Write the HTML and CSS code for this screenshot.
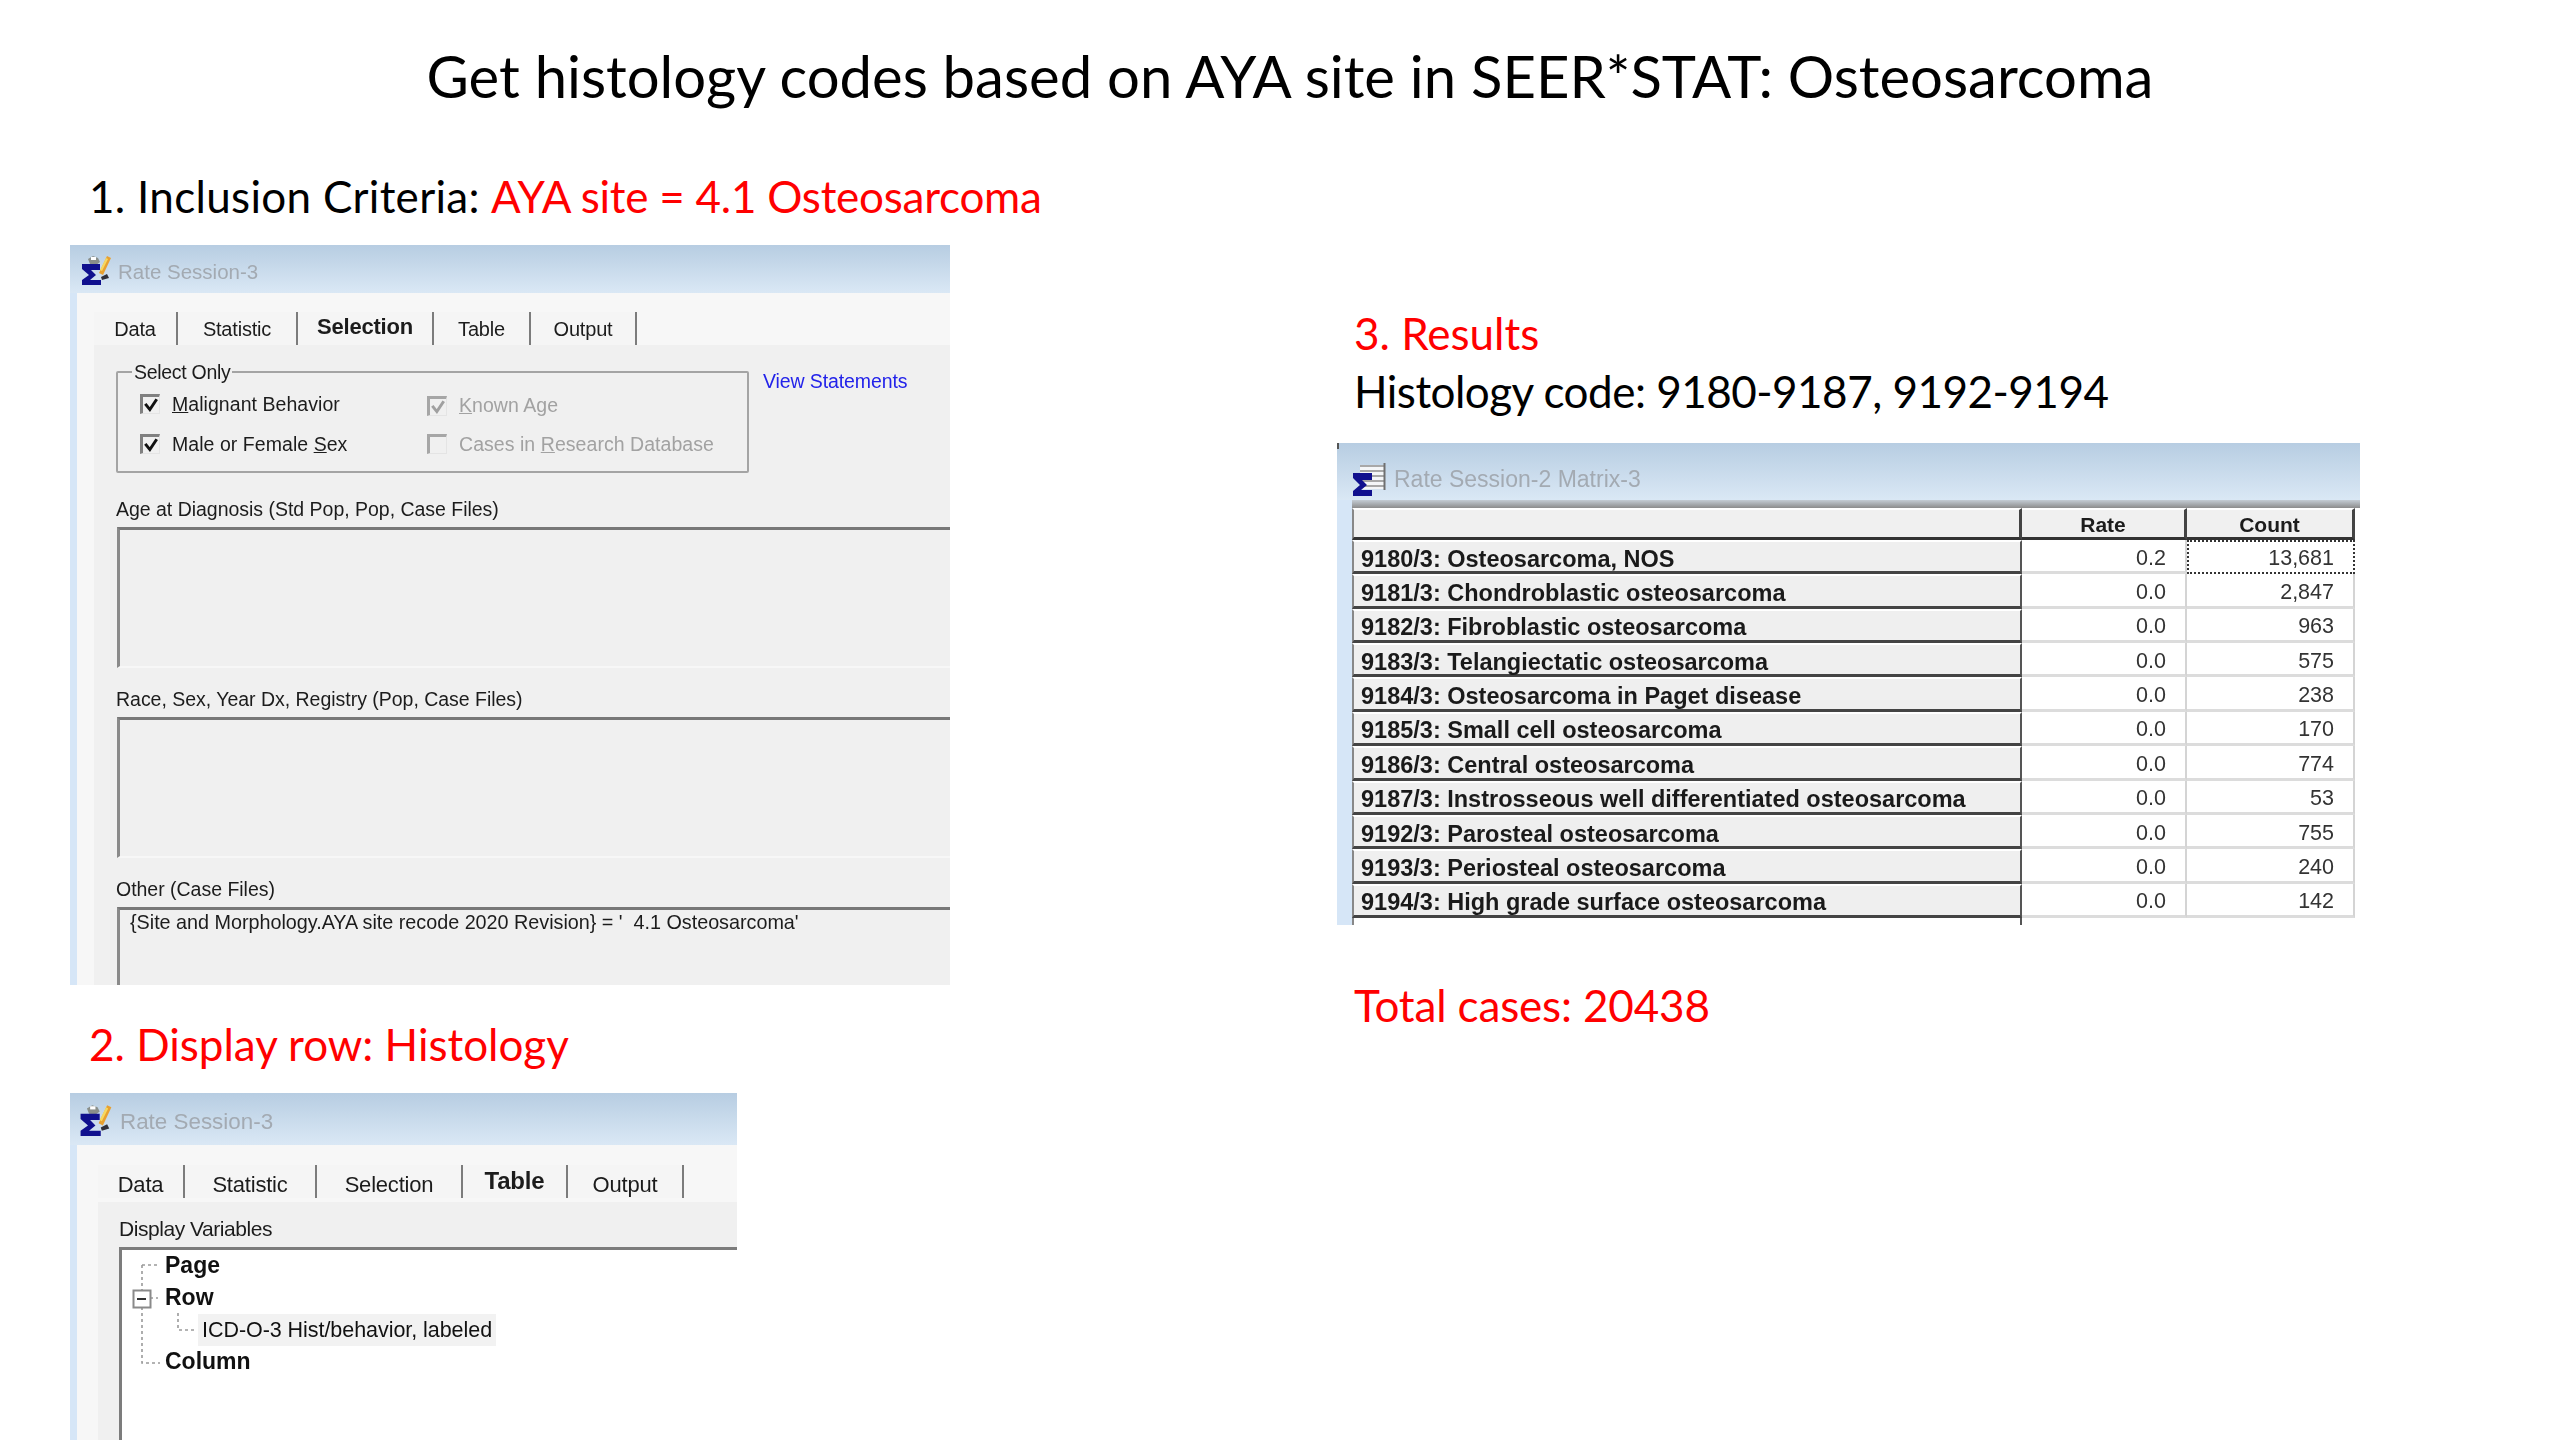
FILE: index.html
```html
<!DOCTYPE html>
<html lang="en">
<head>
<meta charset="utf-8">
<title>Get histology codes based on AYA site in SEER*STAT: Osteosarcoma</title>
<link rel="stylesheet" href="styles.css">
</head>
<body>
<main class="slide">
  <h1 class="title">Get histology codes based on AYA site in SEER*STAT: Osteosarcoma</h1>

  <p class="note note-inclusion"><span class="lead">1. Inclusion Criteria:</span> <span class="red tight">AYA site = 4.1 Osteosarcoma</span></p>

  <section class="win win-selection">
    <header class="titlebar">
      <svg class="ico" viewBox="0 0 30 32"><path d="M6 6l5-3 5 2 2 4-4 3-6-1z" fill="#8a8f8a"/><path d="M9 4h5v3H9z" fill="#fff"/><path d="M17 20L25 3l4 2-8 17z" fill="#e8a030"/><path d="M18 17l6-12 2 1-6 12z" fill="#f6d860"/><path d="M19 24l6-3 2 4-7 2z" fill="#30303a"/><path d="M0 11h18v6H9l5 5-6 5h11v5H0v-5l7-5-7-6z" fill="#10108e"/></svg>
      <span class="wintitle">Rate Session-3</span>
    </header>
    <div class="winbody">
      <nav class="tabs tabs-a">
        <span class="tab">Data</span><span class="tab">Statistic</span><span class="tab active">Selection</span><span class="tab">Table</span><span class="tab">Output</span>
      </nav>
      <div class="panel panel-a">
        <div class="selectrow">
          <fieldset class="group">
            <span class="legend">Select Only</span>
            <label class="chk"><i class="box on"><svg viewBox="0 0 14 14"><path d="M2 6l4 5 6-9" /></svg></i><span><u>M</u>alignant Behavior</span></label>
            <label class="chk off low"><i class="box on"><svg viewBox="0 0 14 14"><path d="M2 6l4 5 6-9" /></svg></i><span><u>K</u>nown Age</span></label>
            <label class="chk"><i class="box on"><svg viewBox="0 0 14 14"><path d="M2 6l4 5 6-9" /></svg></i><span>Male or Female <u>S</u>ex</span></label>
            <label class="chk off"><i class="box"></i><span>Cases in <u>R</u>esearch Database</span></label>
          </fieldset>
          <a class="link">View Statements</a>
        </div>
        <div class="field first">
          <div class="flabel">Age at Diagnosis (Std Pop, Pop, Case Files)</div>
          <div class="fbox"></div>
        </div>
        <div class="field">
          <div class="flabel">Race, Sex, Year Dx, Registry (Pop, Case Files)</div>
          <div class="fbox"></div>
        </div>
        <div class="field last">
          <div class="flabel">Other (Case Files)</div>
          <div class="fbox filled">{Site and Morphology.AYA site recode 2020 Revision} = '&nbsp; 4.1 Osteosarcoma'</div>
        </div>
      </div>
    </div>
  </section>

  <p class="note note-display red">2. Display row: Histology</p>

  <section class="win win-table">
    <header class="titlebar">
      <svg class="ico" viewBox="0 0 30 32"><path d="M6 6l5-3 5 2 2 4-4 3-6-1z" fill="#8a8f8a"/><path d="M9 4h5v3H9z" fill="#fff"/><path d="M17 20L25 3l4 2-8 17z" fill="#e8a030"/><path d="M18 17l6-12 2 1-6 12z" fill="#f6d860"/><path d="M19 24l6-3 2 4-7 2z" fill="#30303a"/><path d="M0 11h18v6H9l5 5-6 5h11v5H0v-5l7-5-7-6z" fill="#10108e"/></svg>
      <span class="wintitle">Rate Session-3</span>
    </header>
    <div class="winbody">
      <nav class="tabs tabs-b">
        <span class="tab">Data</span><span class="tab">Statistic</span><span class="tab">Selection</span><span class="tab active">Table</span><span class="tab">Output</span>
      </nav>
      <div class="panel panel-b">
        <div class="flabel">Display Variables</div>
        <div class="tree">
          <svg class="treelines" viewBox="0 0 80 120" width="80" height="120">
            <path class="dash" d="M20 15V40M20 57V113H38M20 15H38M28 48H36M56 63V80H75"/>
            <rect class="plus" x="11.5" y="40.5" width="17" height="17"/>
            <path class="minus" d="M15 49h9"/>
          </svg>
          <div class="node">Page</div>
          <div class="node">Row</div>
          <div class="node leaf"><span>ICD-O-3 Hist/behavior, labeled</span></div>
          <div class="node">Column</div>
        </div>
      </div>
    </div>
  </section>

  <p class="note note-results red">3. Results</p>
  <p class="note note-code">Histology code: 9180-9187, 9192-9194</p>

  <section class="win win-matrix">
    <header class="titlebar">
      <svg class="ico ico-m" viewBox="0 0 33 33"><path d="M7 2h24v24H7z" fill="#f4f6f8"/><path d="M7 3h24M7 8h24M7 13h24M7 18h24M7 23h24" stroke="#a8a8a8" stroke-width="2"/><path d="M31.500 0v27" stroke="#707070" stroke-width="2"/><path d="M0 10h19v7H9l5 5-6 5h11v6H0v-5l7-6-7-7z" fill="#10108e"/></svg>
      <span class="wintitle">Rate Session-2 Matrix-3</span>
    </header>
    <div class="matrixbody">
      <div class="matrix">
        <div class="hc hc-stub"></div><div class="hc">Rate</div><div class="hc">Count</div>
        <div class="rh">9180/3: Osteosarcoma, NOS</div><div class="td">0.2</div><div class="td sel">13,681</div>
        <div class="rh">9181/3: Chondroblastic osteosarcoma</div><div class="td">0.0</div><div class="td">2,847</div>
        <div class="rh">9182/3: Fibroblastic osteosarcoma</div><div class="td">0.0</div><div class="td">963</div>
        <div class="rh">9183/3: Telangiectatic osteosarcoma</div><div class="td">0.0</div><div class="td">575</div>
        <div class="rh">9184/3: Osteosarcoma in Paget disease</div><div class="td">0.0</div><div class="td">238</div>
        <div class="rh">9185/3: Small cell osteosarcoma</div><div class="td">0.0</div><div class="td">170</div>
        <div class="rh">9186/3: Central osteosarcoma</div><div class="td">0.0</div><div class="td">774</div>
        <div class="rh">9187/3: Instrosseous well differentiated osteosarcoma</div><div class="td">0.0</div><div class="td">53</div>
        <div class="rh">9192/3: Parosteal osteosarcoma</div><div class="td">0.0</div><div class="td">755</div>
        <div class="rh">9193/3: Periosteal osteosarcoma</div><div class="td">0.0</div><div class="td">240</div>
        <div class="rh">9194/3: High grade surface osteosarcoma</div><div class="td">0.0</div><div class="td">142</div>
        <div class="rh stub"></div><div class="td stub"></div><div class="td stub"></div>
      </div>
    </div>
  </section>

  <p class="note note-total red">Total cases: 20438</p>
</main>
</body>
</html>
```

FILE: styles.css
```css
* { box-sizing: border-box; }
html, body { margin: 0; padding: 0; background: #fff; }
.slide {
  position: relative;
  width: 2560px;
  height: 1440px;
  overflow: hidden;
  background: #fff;
  color: #000;
  font-family: "Lato", "Liberation Sans", sans-serif;
}

/* Slide text */
.title {
  position: absolute;
  top: 40px;
  left: 0;
  width: 2580px;
  margin: 0;
  text-align: center;
  font-size: 58px;
  font-weight: 400;
  line-height: 72px;
}
.note {
  position: absolute;
  margin: 0;
  font-size: 44px;
  line-height: 56px;
  white-space: nowrap;
}
.red { color: #ff0000; }
.lead { letter-spacing: 0.3px; }
.tight { letter-spacing: -0.25px; }
.note-inclusion { left: 89px; top: 168px; }
.note-display { left: 89px; top: 1016px; }
.note-results { left: 1354px; top: 305px; }
.note-code { left: 1354px; top: 363px; letter-spacing: -0.5px; }
.note-total { left: 1354px; top: 977px; letter-spacing: -0.15px; }

/* Windows on the slide */
.win {
  position: absolute;
  display: flex;
  flex-direction: column;
  overflow: hidden;
  font-family: "Liberation Sans", Arial, sans-serif;
  color: #1c1c1c;
  filter: blur(0.7px);
}
.win-selection { left: 70px; top: 245px; width: 880px; height: 740px; --title: 48px; }
.win-table { left: 70px; top: 1093px; width: 667px; height: 347px; --title: 52px; }
.win-matrix { left: 1337px; top: 443px; width: 1023px; height: 482px; --title: 57px; }
.win-matrix::before {
  content: "";
  position: absolute;
  top: 0;
  left: 0;
  width: 2px;
  height: 6px;
  background: #555;
}

.titlebar {
  flex: none;
  height: var(--title);
  display: flex;
  align-items: center;
  padding-left: 12px;
  gap: 6px;
  background: linear-gradient(#b7cde2, #dae8f5);
}
.ico { width: 30px; height: 32px; flex: none; }
.wintitle { color: #a3aab2; font-size: 20.5px; position: relative; top: 3px; }
.win-table .titlebar { padding-left: 10px; gap: 7px; }
.win-table .ico { width: 33px; height: 34px; }
.win-table .wintitle { font-size: 22.4px; }
.win-matrix .titlebar { padding-left: 16px; gap: 8px; padding-top: 15px; }
.ico-m { width: 33px; height: 33px; }
.win-matrix .wintitle { font-size: 23px; top: 0; }

.winbody {
  flex: 1;
  display: flex;
  flex-direction: column;
  min-height: 0;
  background: #f7f7f7;
  border-left: 7px solid #d6e6f7;
}

/* Tabs */
.tabs {
  flex: none;
  display: grid;
  height: 33px;
  margin-top: 19px;
  margin-left: 17px;
  font-size: 20px;
}
.tabs-a { grid-template-columns: 84px 120px 136px 97px 106px; }
.tabs-b {
  grid-template-columns: 87px 132px 146px 105px 116px;
  margin-left: 21px;
  margin-top: 20px;
  height: 32px;
  font-size: 22px;
}
.tab {
  display: flex;
  align-items: center;
  justify-content: center;
  padding-top: 1px;
  background: #f5f5f5;
  border-right: 2px solid #7c7c7c;
  letter-spacing: -0.2px;
}
.tabs-b .tab { padding-top: 6px; }
.tab.active { font-weight: 700; padding-top: 0; padding-bottom: 3px; font-size: 22px; }
.tabs-b .tab.active { font-size: 24px; padding-top: 2px; }

/* Panels */
.panel {
  flex: 1;
  min-height: 0;
  display: flex;
  flex-direction: column;
  background: #f0f0f0;
}
.panel-a { margin-left: 17px; padding: 26px 0 0 22px; }
.panel-b { margin: 5px 0 0 21px; padding: 15px 0 0 21px; }

.selectrow { display: flex; align-items: flex-start; flex: none; }
.group {
  position: relative;
  width: 633px;
  height: 102px;
  margin: 0;
  padding: 21px 0 0 23px;
  display: grid;
  grid-template-columns: 287px 1fr;
  grid-auto-rows: 20px;
  row-gap: 20px;
  border: 2px solid #a4a4a4;
  border-radius: 2px;
}
.legend {
  position: absolute;
  top: -13px;
  left: 14px;
  padding: 0 2px;
  background: #f0f0f0;
  font-size: 19.5px;
  line-height: 24px;
  letter-spacing: -0.3px;
}
.chk {
  display: flex;
  align-items: center;
  gap: 12px;
  font-size: 19.5px;
  white-space: nowrap;
  letter-spacing: 0.05px;
}
.chk.off { color: #a2a2a2; }
.chk.low { margin-top: 3px; }
.box {
  flex: none;
  width: 20px;
  height: 20px;
  margin-left: -1px;
  border-top: 3px solid #808080;
  border-left: 3px solid #808080;
  border-right: 1px solid #e4e4e4;
  border-bottom: 1px solid #e4e4e4;
}
.box svg { display: block; width: 16px; height: 16px; fill: none; stroke: #111; stroke-width: 2.6; }
.chk.off .box { border-top-color: #a6a6a6; border-left-color: #a6a6a6; }
.chk.off .box svg { stroke: #a0a0a0; }
.link {
  margin: -2px 0 0 14px;
  color: #2323ea;
  font-size: 19.5px;
  line-height: 24px;
  letter-spacing: -0.1px;
  white-space: nowrap;
}

.field { display: flex; flex-direction: column; flex: none; margin-top: 20px; }
.field.first { margin-top: 25px; }
.field.last { flex: 1; min-height: 0; }
.flabel {
  flex: none;
  height: 24px;
  line-height: 22px;
  font-size: 19.5px;
  letter-spacing: -0.02px;
  white-space: nowrap;
}
.fbox {
  height: 141px;
  margin: 5px 0 0 1px;
  background: #f0f0f0;
  border-top: 3px solid #787878;
  border-left: 3px solid #8a8a8a;
  border-bottom: 2px solid #f7f7f7;
}
.field.last .fbox { flex: 1; height: auto; border-bottom: 0; }
.filled {
  padding: 1px 0 0 10px;
  font-size: 19.8px;
  line-height: 22px;
  letter-spacing: -0.02px;
  white-space: nowrap;
}

/* Tree */
.panel-b .flabel { font-size: 21px; letter-spacing: -0.45px; line-height: 24px; }
.tree {
  position: relative;
  flex: 1;
  min-height: 0;
  margin-top: 6px;
  background: #fff;
  border-top: 3px solid #7c7c7c;
  border-left: 3px solid #7c7c7c;
}
.treelines { position: absolute; top: 0; left: 0; }
.dash { fill: none; stroke: #9a9a9a; stroke-width: 1.6; stroke-dasharray: 3 3; }
.plus { fill: #fff; stroke: #8a8a8a; stroke-width: 2; }
.minus { fill: none; stroke: #333; stroke-width: 2; }
.node {
  height: 32px;
  line-height: 30px;
  padding-left: 43px;
  font-size: 23px;
  font-weight: 700;
  color: #111;
}
.node.leaf { padding-left: 76px; font-weight: 400; font-size: 21.5px; letter-spacing: -0.05px; line-height: 32px; }
.node.leaf span { display: inline-block; padding: 0 4px; background: #f2f2f2; }

/* Matrix */
.matrixbody {
  flex: 1;
  min-height: 0;
  padding-top: 8px;
  background: linear-gradient(#c4ccd4, #8c8c8c) top / 100% 8px no-repeat, #fff;
  border-left: 15px solid #d6e6f7;
}
.matrix {
  display: grid;
  grid-template-columns: 670px 165px 168px;
  grid-template-rows: 32px repeat(11, 34.36px) 7px;
}
.hc {
  display: flex;
  align-items: center;
  justify-content: center;
  padding-top: 2px;
  background: #f0f0f0;
  font-size: 21px;
  font-weight: 700;
  border-top: 2px solid #fff;
  border-right: 3px solid #444;
  border-bottom: 3px solid #333;
}
.hc-stub { border-left: 2px solid #888; }
.rh {
  display: flex;
  align-items: center;
  padding-left: 7px;
  padding-top: 5px;
  background: #efefef;
  font-weight: 700;
  font-size: 23.5px;
  color: #1a1a1a;
  white-space: nowrap;
  border-top: 2px solid #fff;
  border-left: 2px solid #888;
  border-right: 2px solid #555;
  border-bottom: 3px solid #444;
}
.td {
  display: flex;
  align-items: center;
  justify-content: flex-end;
  padding-right: 19px;
  padding-top: 5px;
  background: #fff;
  color: #333;
  font-size: 21.5px;
  border-right: 2px solid #d4d4d4;
  border-bottom: 3px solid #dcdcdc;
}
.td.sel { border: 2px dotted #333; padding-right: 19px; padding-top: 2px; }
.stub { border-top: 0; border-bottom: 0; background: #fff; }
.td.stub { border-right: 0; }
```
